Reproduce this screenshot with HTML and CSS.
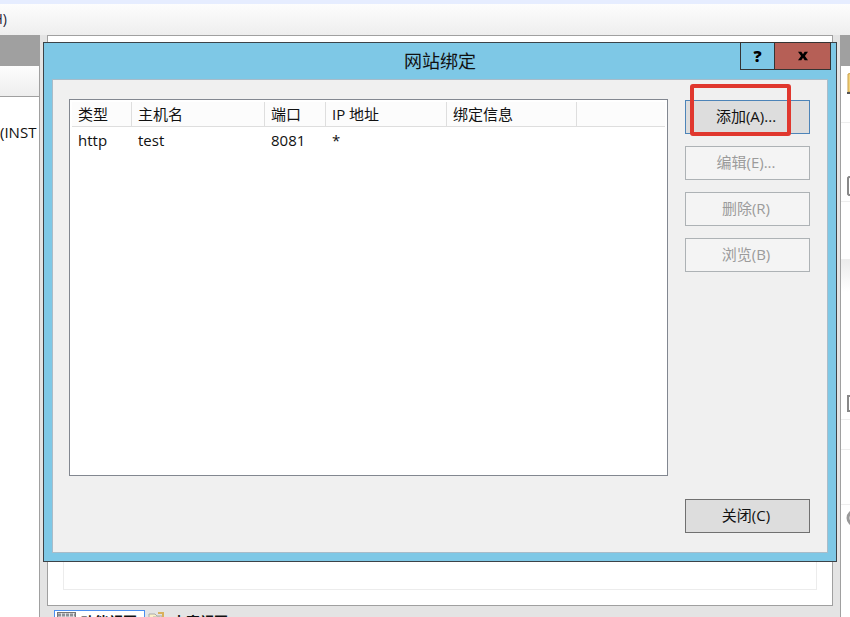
FILE: index.html
```html
<!DOCTYPE html>
<html lang="zh-CN">
<head>
<meta charset="utf-8">
<title>网站绑定</title>
<link rel="stylesheet" href="styles.css">
</head>
<body>
<div class="app">
  <div class="strip"></div>
  <header class="menubar"><span class="menu-item">H)</span></header>
  <div class="workspace">
    <aside class="tree">
      <div class="pane-head"></div>
      <div class="pane-tools"></div>
      <div class="tree-node">(INST</div>
    </aside>
    <main class="center">
      <div class="view"><div class="view-list"></div></div>
      <nav class="tabs">
        <a class="tab selected" href="#features">
          <svg width="20" height="18" viewBox="0 0 20 18"><rect x=".5" y=".5" width="18" height="16" fill="#e4e6e8" stroke="#777"/><path d="M1 3h17" stroke="#8d9298" stroke-width="3" stroke-dasharray="3 1"/><path d="M3 7h4M9 7h4M15 7h2" stroke="#777" stroke-width="2"/></svg>
          功能视图</a>
        <a class="tab" href="#content">
          <svg width="20" height="18" viewBox="0 0 20 18"><path d="M1 16V2h6l2 2h5v12z" fill="#fbf1c8" stroke="#aaa"/><path d="M5 5h7v11H5z" fill="#fff" stroke="#aaa"/><path d="M10 1h5v6" fill="none" stroke="#d9b15c" stroke-width="2"/></svg>
          内容视图</a>
      </nav>
    </main>
    <aside class="actions">
      <div class="pane-head"></div>
      <div class="group first"><svg width="9" height="24" viewBox="0 0 9 24"><path d="M7 21V3l4-1v19z" fill="#f2d27a" stroke="#c9a04a"/><path d="M6 22h5" stroke="#555" stroke-width="2"/></svg></div>
      <div class="group second"><svg width="9" height="24" viewBox="0 0 9 24"><path d="M11 3H8L7 4v16l1 1h3" fill="#fff" stroke="#888" stroke-width="2"/></svg></div>
      <div class="group third"></div>
      <div class="group fourth"><svg width="9" height="24" viewBox="0 0 9 24"><path d="M11 5H7v15h4" fill="#fff" stroke="#888" stroke-width="2"/></svg></div>
      <div class="group fifth"></div>
      <div class="group sixth"></div>
      <div class="group last"><svg width="9" height="24" viewBox="0 0 9 24"><circle cx="14" cy="12" r="7" fill="#fff" stroke="#999" stroke-width="3"/></svg></div>
    </aside>
  </div>
</div>

<section class="dialog" role="dialog" aria-labelledby="dialog-title">
  <div class="titlebar">
    <h1 class="title" id="dialog-title">网站绑定</h1>
    <div class="window-buttons">
      <button class="help" type="button" aria-label="帮助">?</button>
      <button class="close" type="button" aria-label="关闭窗口"><svg width="12" height="10" viewBox="0 0 14 12"><path d="M1 1h4l2 3 2-3h4L9.300 6 13 11H9L7 8l-2 3H1l3.700-5z"/></svg></button>
    </div>
  </div>
  <div class="client">
    <div class="list">
      <table>
        <colgroup><col class="c-type"><col class="c-host"><col class="c-port"><col class="c-ip"><col class="c-info"><col></colgroup>
        <thead><tr><th>类型</th><th>主机名</th><th>端口</th><th>IP 地址</th><th>绑定信息</th><td></td></tr></thead>
        <tbody><tr><td>http</td><td>test</td><td>8081</td><td>*</td><td></td><td></td></tr></tbody>
      </table>
    </div>
    <div class="side">
      <div class="marked"><button class="btn default" type="button">添加(A)...</button></div>
      <button class="btn" type="button" disabled>编辑(E)...</button>
      <button class="btn" type="button" disabled>删除(R)</button>
      <button class="btn" type="button" disabled>浏览(B)</button>
      <button class="btn bottom" type="button">关闭(C)</button>
    </div>
  </div>
</section>
</body>
</html>
```
FILE: styles.css
```css
* { box-sizing: border-box; }

html, body { height: 100%; }

body {
  margin: 0;
  overflow: hidden;
  position: relative;
  font-family: "Open Sans", "Noto Sans CJK SC", sans-serif;
  font-size: 15px;
  color: #111;
}

.app {
  display: flex;
  flex-direction: column;
  height: 100%;
  background: #e4e4e4;
}

.strip { flex: none; height: 4px; background: #e6edff; }

.menubar {
  flex: none;
  display: flex;
  justify-content: flex-start;
  height: 31px;
  line-height: 29px;
  background: linear-gradient(#fdfdfd, #eeeeee);
}

.menu-item { width: 7px; display: flex; justify-content: flex-end; font-size: 14px; color: #223; }

.workspace {
  flex: 1;
  min-height: 0;
  display: grid;
  grid-template-columns: 40px minmax(0, 1fr) 10px;
}

.pane-head { height: 31px; background: #a0a0a0; }

.tree {
  overflow: hidden;
  background: #fff;
  border-right: 1px solid #a0a0a0;
}

.pane-tools {
  height: 31px;
  background: linear-gradient(#fdfdfd, #eeeeee);
  border-bottom: 1px solid #a0a0a0;
}

.tree-node { margin-top: 24px; line-height: 22px; white-space: nowrap; }

.center {
  display: flex;
  flex-direction: column;
  min-height: 0;
  padding: 0 7px;
}

.view {
  flex: 1;
  padding: 8px 15px 15px;
  background: #fff;
  border: 1px solid #a0a0a0;
}

.view-list { height: 100%; border: 1px solid #ececec; }

.tabs {
  flex: none;
  display: flex;
  height: 11px;
  padding: 4px 7px 0;
  overflow: hidden;
}

.tab {
  flex: none;
  display: flex;
  align-items: flex-start;
  gap: 4px;
  height: 24px;
  padding: 1px 7px 0 2px;
  border: 1px solid transparent;
  color: #111;
  font-size: 14px;
  font-weight: 700;
  line-height: 20px;
  text-decoration: none;
}

.tab.selected { background: #fff; border: 1px solid #4c8ff0; }

.actions {
  overflow: hidden;
  background: #fff;
  border-left: 1px solid #a0a0a0;
}

.group { display: flex; align-items: flex-start; border-bottom: 1px solid #eeeeee; }
.group svg { flex: none; }
.first { height: 57px; padding-top: 5px; }
.second { height: 79px; padding-top: 51px; }
.third { height: 58px; }
.fourth { height: 160px; padding-top: 131px; background: linear-gradient(#ececec, #fff 32px); }
.fifth { height: 30px; }
.sixth { height: 55px; }
.last { padding-top: 1px; border-bottom: 0; }

.dialog {
  position: absolute;
  inset: 42px 13px 55px 43px;
  display: flex;
  flex-direction: column;
  padding: 0 8px 8px;
  background: #7ec8e6;
  border: 1px solid #3c4348;
}

.titlebar {
  flex: none;
  display: grid;
  grid-template-columns: 1fr auto 1fr;
  height: 36px;
}

.title {
  grid-column: 2;
  margin: 0;
  font-size: 18px;
  font-weight: 400;
  line-height: 36px;
}

.window-buttons {
  justify-self: end;
  display: flex;
  height: 28px;
  margin: -1px -3px 0 0;
}

.help, .close {
  display: flex;
  align-items: center;
  justify-content: center;
  padding: 0;
  border: 1px solid #343434;
  color: #000;
}

.help {
  width: 35px;
  background: #7ec8e6;
  font: 800 16px "Open Sans", sans-serif;
}

.close { width: 57px; margin-left: -1px; background: #b65f56; }

.client {
  flex: 1;
  min-height: 0;
  display: flex;
  gap: 17px;
  padding: 19px 17px 19px 16px;
  background: #f0f0f0;
  border: 1px solid #a9bcc9;
}

.list {
  flex: 1;
  min-width: 0;
  margin-bottom: 57px;
  padding: 2px;
  background: #fff;
  border: 1px solid #828790;
}

table { width: 100%; table-layout: fixed; border-collapse: separate; border-spacing: 0; }
.c-type { width: 60px; }
.c-host { width: 133px; }
.c-port { width: 61px; }
.c-ip { width: 121px; }
.c-info { width: 130px; }

th, td { padding: 0 0 0 6px; text-align: left; font-weight: 400; white-space: nowrap; }

thead th, thead td {
  height: 25px;
  font-size: 15px;
  line-height: 22px;
  background: #fcfcfc;
  border-bottom: 1px solid #dedede;
}

thead th { border-right: 1px solid #dedede; }

tbody td { height: 26px; line-height: 26px; }

.side {
  flex: none;
  display: flex;
  flex-direction: column;
  gap: 12px;
  width: 125px;
  padding-top: 1px;
}

.btn {
  width: 100%;
  height: 34px;
  padding: 0 3px 2px 0;
  border: 1px solid #707070;
  background: #dddddd;
  color: #111;
  font-family: inherit;
  font-size: 15px;
  line-height: 30px;
}

.btn.default { display: block; border-color: #4d84b8; }
.btn:disabled { background: #f4f4f4; border-color: #adb2b5; color: #9b9b9b; }
.btn.bottom { margin-top: auto; }

.marked { position: relative; }

.marked::after {
  content: "";
  position: absolute;
  inset: -16px 19px -2px 5px;
  border: 4px solid #e0372e;
  border-radius: 3px;
  pointer-events: none;
}
```
